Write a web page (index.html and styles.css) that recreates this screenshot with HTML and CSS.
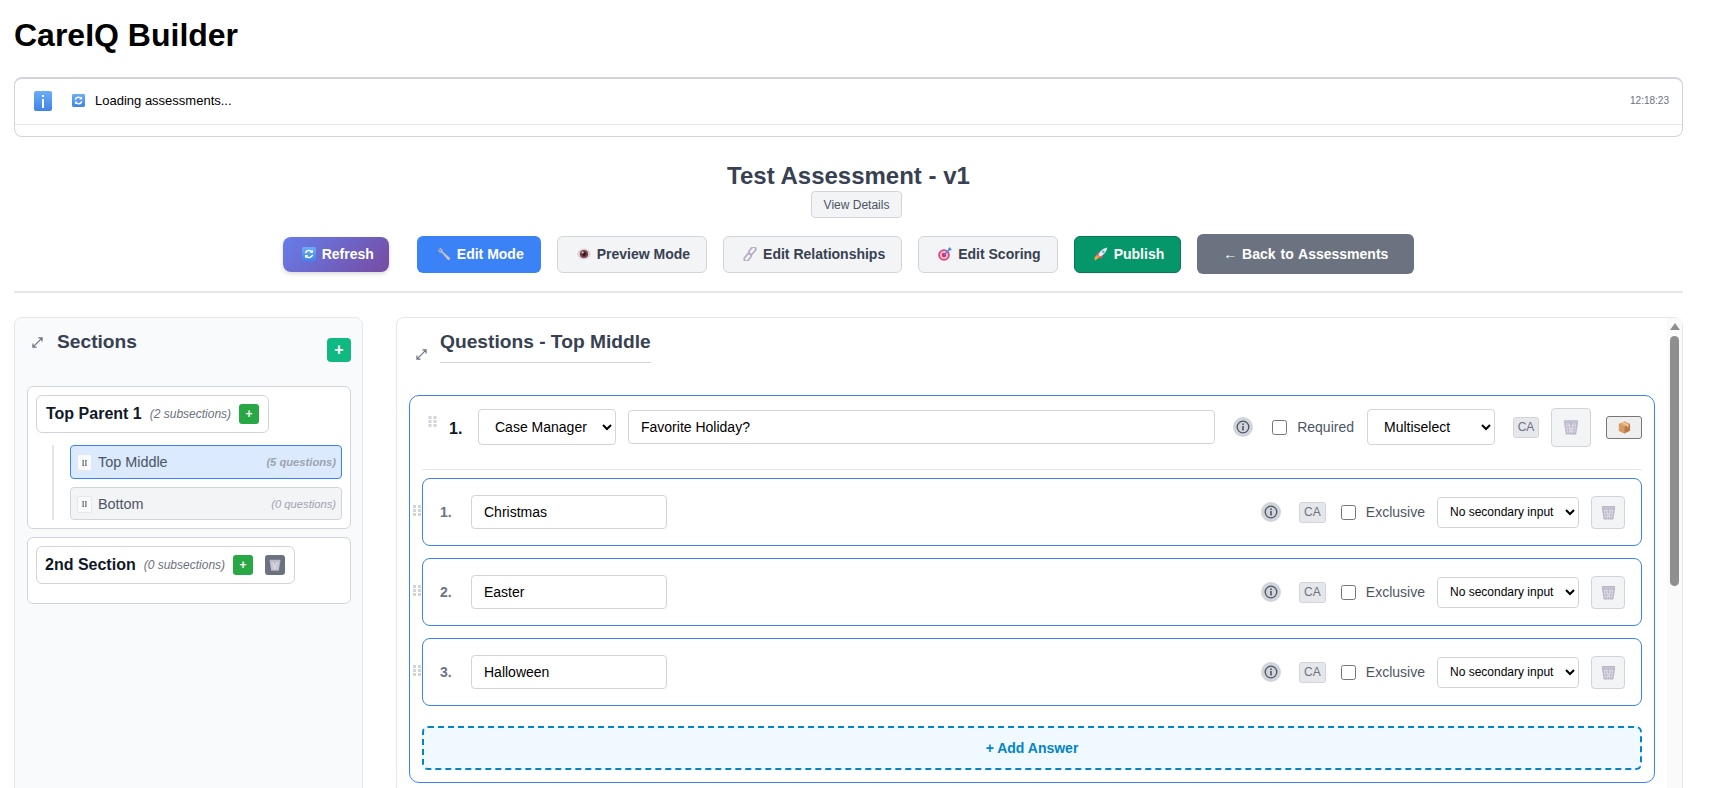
FILE: index.html
```html
<!DOCTYPE html>
<html lang="en">
<head>
  <meta charset="UTF-8">
  <title>CareIQ Builder</title>
  <link rel="stylesheet" href="styles.css">
</head>
<body>
  <!-- icon sprite -->
  <svg class="sprite" aria-hidden="true">
    <defs>
      <linearGradient id="blueTile" x1="0" y1="0" x2="0" y2="1">
        <stop offset="0" stop-color="#6aaef5"/>
        <stop offset="1" stop-color="#3f83ea"/>
      </linearGradient>
    </defs>
    <symbol id="i-info" viewBox="0 0 18 20">
      <rect width="18" height="20" rx="2" fill="url(#blueTile)"/>
      <rect x="8" y="8" width="2" height="9" fill="#fff"/>
      <rect x="8" y="4" width="2" height="2" fill="#fff"/>
    </symbol>
    <symbol id="i-refresh" viewBox="0 0 14 14">
      <rect width="14" height="14" rx="1.5" fill="url(#blueTile)"/>
      <path d="M3.4 6.2A3.7 3.7 0 0 1 10 5M10.6 7.8A3.7 3.7 0 0 1 4 9" fill="none" stroke="#fff" stroke-width="1.5"/>
      <path d="M10.9 2.8v3.2H7.7zM3.1 11.2V8h3.2z" fill="#fff"/>
    </symbol>
    <symbol id="i-wrench" viewBox="0 0 14 14">
      <path d="M2 1.2 4.2 3.4 3.4 4.2 1.2 2A3 3 0 0 0 4.6 5.6L10.5 12.6A1.3 1.3 0 0 0 12.6 10.6L5.6 4.6A3 3 0 0 0 2 1.2Z" fill="#c3c9d4" stroke="#8d94a3" stroke-width=".4"/>
    </symbol>
    <symbol id="i-eye" viewBox="0 0 14 14">
      <ellipse cx="7" cy="7" rx="6.6" ry="5.4" fill="#d9d3d6"/>
      <circle cx="7" cy="7" r="4.1" fill="#7a3b46"/>
      <circle cx="7" cy="7" r="2" fill="#2d1a20"/>
      <circle cx="5.6" cy="5.5" r="1" fill="#f1e6e8"/>
    </symbol>
    <symbol id="i-link" viewBox="0 0 14 14">
      <g fill="none" stroke="#b7aec4" stroke-width="1.8">
        <rect x="7.1" y="-.6" width="4.4" height="8.4" rx="2.2" transform="rotate(40 9.3 3.6)"/>
        <rect x="2.5" y="6.2" width="4.4" height="8.4" rx="2.2" transform="rotate(40 4.7 10.4)"/>
      </g>
    </symbol>
    <symbol id="i-target" viewBox="0 0 14 14">
      <circle cx="6" cy="8" r="5.8" fill="#e0457b"/>
      <circle cx="6" cy="8" r="3.9" fill="#f4c4d6"/>
      <circle cx="6" cy="8" r="2.2" fill="#d92f6c"/>
      <path d="M6 8 12 2" stroke="#3f83ea" stroke-width="1.2"/>
      <path d="M10.4 1.4 12 0l.4 1.6L14 2l-1.6 1.6-2-.4z" fill="#3f83ea"/>
    </symbol>
    <symbol id="i-rocket" viewBox="0 0 14 14">
      <path d="M5 9 2 8.500 4 5.600 6.500 5.300zM5 9l.6 3 2.900-2 .3-2.500z" fill="#e8577e"/>
      <path d="M4.500 8.200C5.500 4.500 8.800 1.500 13.400.6 12.500 5.200 9.500 8.500 5.800 9.500z" fill="#eceaf1"/>
      <circle cx="9.300" cy="4.700" r="1.300" fill="#5da5ee"/>
      <path d="M4 9.500 1 13l3.500-3z M3.300 8.800.6 11.300" stroke="#f6a23a" stroke-width="1.400" fill="#f6a23a"/>
    </symbol>
    <symbol id="i-trash" viewBox="0 0 14 14">
      <path d="M.8 1h12.400v1.600L11.500 13.600h-9L.8 2.600z" fill="#b9b5c7"/>
      <path d="M.8 2.400h12.400" stroke="#d5d2de" stroke-width=".6"/>
      <path d="M3 3.500 4 12.500M5.500 3.500 6 12.500M8.500 3.500 8 12.500M11 3.500 10 12.500M4.200 3.500l4 9M9.800 3.500l-4 9M2.300 5.500h9.400M2.600 8h8.800M3 10.500h8" stroke="#e4e2eb" stroke-width=".6"/>
    </symbol>
    <symbol id="i-box" viewBox="0 0 14 14">
      <path d="M7 .5 13 3.300V10.500L7 13.500 1 10.500V3.300z" fill="#b97a48"/>
      <path d="M7 .5 13 3.300 7 6.200 1 3.300z" fill="#e2ab78"/>
      <path d="M7 6.200V13.500L1 10.500V3.300z" fill="#d99a63"/>
      <path d="M3.800 1.900 9.900 4.800V7L11.300 6.300V4.100L5.100 1.300z" fill="#f0cfa7"/>
    </symbol>
    <symbol id="i-expand" viewBox="0 0 12 12">
      <path d="M7 1h4v4M5 11H1V7M11 1 1 11" fill="none" stroke="#6b7280" stroke-width="1.300"/>
    </symbol>
    <symbol id="i-dots" viewBox="0 0 8 11">
      <path d="M0 0h3v3H0zM5 0h3v3H5zM0 4h3v3H0zM5 4h3v3H5zM0 8h3v3H0zM5 8h3v3H5z" fill="currentColor"/>
    </symbol>
    <symbol id="i-tip" viewBox="0 0 20 20">
      <circle cx="10" cy="10" r="10" fill="#d1d5db"/>
      <circle cx="10" cy="10" r="5.800" fill="none" stroke="#4b5563" stroke-width="1.300"/>
      <rect x="9.200" y="9" width="1.600" height="4.500" fill="#4b5563"/>
      <rect x="9.200" y="6.400" width="1.600" height="1.600" fill="#4b5563"/>
    </symbol>
  </svg>

  <h1 class="app-title">CareIQ Builder</h1>

  <div class="log-box">
    <div class="log-row">
      <svg class="log-tile"><use href="#i-info"/></svg>
      <svg class="log-refresh"><use href="#i-refresh"/></svg>
      <span class="log-text">Loading assessments...</span>
      <span class="log-time">12:18:23</span>
    </div>
  </div>

  <div class="assessment-head">
    <h2>Test Assessment - v1</h2>
    <button class="details-btn">View Details</button>
  </div>

  <div class="toolbar">
    <button class="btn btn-refresh"><svg class="btn-icon"><use href="#i-refresh"/></svg>Refresh</button>
    <button class="btn btn-blue"><svg class="btn-icon"><use href="#i-wrench"/></svg>Edit Mode</button>
    <button class="btn btn-light"><svg class="btn-icon"><use href="#i-eye"/></svg>Preview Mode</button>
    <button class="btn btn-light"><svg class="btn-icon"><use href="#i-link"/></svg>Edit Relationships</button>
    <button class="btn btn-light"><svg class="btn-icon"><use href="#i-target"/></svg>Edit Scoring</button>
    <button class="btn btn-green"><svg class="btn-icon"><use href="#i-rocket"/></svg>Publish</button>
    <button class="btn btn-back">← Back to Assessments</button>
  </div>

  <div class="builder">
    <!-- left column -->
    <aside class="sections-panel">
      <div class="sections-head">
        <svg class="expand"><use href="#i-expand"/></svg>
        <h3>Sections</h3>
        <button class="add-section">+</button>
      </div>

      <div class="group">
        <div class="chip">
          <strong>Top Parent 1</strong>
          <em>(2 subsections)</em>
          <button class="mini-btn mini-add">+</button>
        </div>
        <div class="sub-list">
          <div class="sub-item sub-active">
            <span class="handle"><svg><use href="#i-dots"/></svg></span>
            <span class="sub-name">Top Middle</span>
            <span class="sub-count">(5 questions)</span>
          </div>
          <div class="sub-item">
            <span class="handle"><svg><use href="#i-dots"/></svg></span>
            <span class="sub-name">Bottom</span>
            <span class="sub-count sub-empty">(0 questions)</span>
          </div>
        </div>
      </div>

      <div class="group group-empty">
        <div class="chip chip-tight">
          <strong>2nd Section</strong>
          <em>(0 subsections)</em>
          <button class="mini-btn mini-add">+</button>
          <button class="mini-btn mini-del"><svg><use href="#i-trash"/></svg></button>
        </div>
      </div>
    </aside>

    <!-- right column -->
    <section class="questions-panel">
      <div class="questions-head">
        <svg class="expand"><use href="#i-expand"/></svg>
        <h3>Questions - Top Middle</h3>
      </div>

      <div class="question-card">
        <div class="question-row">
          <svg class="q-dots"><use href="#i-dots"/></svg>
          <span class="q-num">1.</span>
          <select class="q-role"><option>Case Manager</option></select>
          <input class="q-text" type="text" value="Favorite Holiday?">
          <svg class="tip q-tip"><use href="#i-tip"/></svg>
          <input class="check q-check" type="checkbox">
          <span class="check-label">Required</span>
          <select class="q-type"><option>Multiselect</option></select>
          <span class="ca q-ca">CA</span>
          <button class="trash-btn q-trash"><svg><use href="#i-trash"/></svg></button>
          <button class="box-btn"><svg><use href="#i-box"/></svg></button>
        </div>

        <div class="answer-card">
          <svg class="a-dots"><use href="#i-dots"/></svg>
          <span class="a-num">1.</span>
          <input class="a-text" type="text" value="Christmas">
          <svg class="tip a-tip"><use href="#i-tip"/></svg>
          <span class="ca">CA</span>
          <input class="check a-check" type="checkbox">
          <span class="check-label">Exclusive</span>
          <select class="a-input"><option>No secondary input</option></select>
          <button class="trash-btn a-trash"><svg><use href="#i-trash"/></svg></button>
        </div>
        <div class="answer-card">
          <svg class="a-dots"><use href="#i-dots"/></svg>
          <span class="a-num">2.</span>
          <input class="a-text" type="text" value="Easter">
          <svg class="tip a-tip"><use href="#i-tip"/></svg>
          <span class="ca">CA</span>
          <input class="check a-check" type="checkbox">
          <span class="check-label">Exclusive</span>
          <select class="a-input"><option>No secondary input</option></select>
          <button class="trash-btn a-trash"><svg><use href="#i-trash"/></svg></button>
        </div>
        <div class="answer-card">
          <svg class="a-dots"><use href="#i-dots"/></svg>
          <span class="a-num">3.</span>
          <input class="a-text" type="text" value="Halloween">
          <svg class="tip a-tip"><use href="#i-tip"/></svg>
          <span class="ca">CA</span>
          <input class="check a-check" type="checkbox">
          <span class="check-label">Exclusive</span>
          <select class="a-input"><option>No secondary input</option></select>
          <button class="trash-btn a-trash"><svg><use href="#i-trash"/></svg></button>
        </div>

        <button class="add-answer">+ Add Answer</button>
      </div>

      <!-- scrollbar of the panel -->
      <div class="scroll-track">
        <span class="scroll-arrow"></span>
        <span class="scroll-thumb"></span>
      </div>
    </section>
  </div>
</body>
</html>
```

FILE: styles.css
```css
* {
  box-sizing: border-box;
}
html, body {
  height: 100%;
  overflow: hidden;
}
body {
  margin: 0;
  padding: 0 47px 0 14px;
  background: #fff;
  color: #000;
  font-family: "Liberation Sans", Arial, sans-serif;
}
button, input, select {
  font-family: inherit;
}
.sprite {
  position: absolute;
  width: 0;
  height: 0;
}

.app-title {
  margin: 17px 0 23px;
  font-size: 32px;
  line-height: 37px;
  font-weight: 700;
}

/* log box */
.log-box {
  height: 60px;
  border: 1px solid #d1d5db;
  border-top-width: 2px;
  border-radius: 8px;
}
.log-row {
  display: flex;
  align-items: center;
  height: 46px;
  padding: 0 13px 2px 19px;
  border-bottom: 1px solid #e5e7eb;
}
.log-tile {
  width: 18px;
  height: 20px;
}
.log-refresh {
  width: 13px;
  height: 13px;
  margin-left: 20px;
}
.log-text {
  margin-left: 10px;
  font-size: 13px;
}
.log-time {
  margin-left: auto;
  color: #6b7280;
  font-size: 10px;
}

/* title and toolbar */
.assessment-head {
  display: flex;
  flex-direction: column;
  align-items: center;
  margin-top: 25px;
}
.assessment-head h2 {
  margin: 0 0 1px;
  color: #374151;
  font-size: 24px;
  line-height: 28px;
}
.details-btn {
  width: 91px;
  height: 27px;
  margin-left: 16px;
  padding: 0;
  border: 1px solid #d1d5db;
  border-radius: 4px;
  background: #f3f4f6;
  color: #4b5563;
  font-size: 12px;
}
.toolbar {
  display: flex;
  justify-content: center;
  align-items: center;
  gap: 16px;
  height: 40px;
  margin-top: 16px;
}
.btn {
  display: flex;
  align-items: center;
  height: 37px;
  padding: 0 16px;
  border: 1px solid transparent;
  border-radius: 6px;
  font-size: 14px;
  font-weight: 700;
  white-space: nowrap;
}
.btn-icon {
  width: 14px;
  height: 14px;
  margin: 0 6px 0 3px;
  flex: none;
}
.btn-refresh {
  height: 35px;
  margin-right: 12px;
  padding-right: 15px;
  border: 0;
  border-radius: 8px;
  background: linear-gradient(135deg, #667eea, #764ba2);
  box-shadow: 0 2px 4px rgba(0, 0, 0, .15);
  color: #fff;
}
.btn-blue {
  background: #3b82f6;
  color: #fff;
}
.btn-light {
  background: #f3f4f6;
  border-color: #d1d5db;
  color: #374151;
}
.btn-green {
  background: #059669;
  border-color: #047857;
  color: #fff;
}
.btn-back {
  height: 40px;
  padding: 0 25px;
  background: #6b7280;
  color: #fff;
  word-spacing: 1px;
}

.builder {
  display: grid;
  grid-template-columns: 349px 1fr;
  gap: 33px;
  height: 600px;
  margin-top: 17px;
  padding-top: 24px;
  border-top: 2px solid #e5e7eb;
}

.expand {
  width: 11px;
  height: 11px;
  flex: none;
}

/* sections column */
.sections-panel {
  padding: 0 11px 0 12px;
  border: 1px solid #e5e7eb;
  border-radius: 8px;
  background: #f9fafb;
}
.sections-head {
  display: flex;
  height: 68px;
}
.sections-head .expand {
  margin: 19px 0 0 5px;
}
.sections-head h3 {
  margin: 12px 0 0 14px;
  color: #374151;
  font-size: 19.2px;
  line-height: 24px;
}
.add-section {
  width: 24px;
  height: 24px;
  margin: 20px 0 0 auto;
  padding: 0;
  border: 0;
  border-radius: 4px;
  background: #10b981;
  color: #fff;
  font-size: 16px;
  font-weight: 700;
  line-height: 22px;
}
.group {
  margin-bottom: 8px;
  padding: 8px;
  border: 1px solid #d1d5db;
  border-radius: 6px;
  background: #fff;
}
.group-empty {
  height: 67px;
}
.chip {
  display: inline-flex;
  align-items: center;
  height: 38px;
  padding: 0 9px;
  border: 1px solid #d1d5db;
  border-radius: 6px;
  background: #fff;
}
.chip-tight {
  padding-left: 8px;
}
.chip strong {
  color: #111827;
  font-size: 16px;
}
.chip em {
  margin: 0 8px;
  color: #6b7280;
  font-size: 12px;
}
.mini-btn {
  display: flex;
  justify-content: center;
  align-items: center;
  width: 20px;
  height: 20px;
  padding: 0;
  border: 0;
  border-radius: 3px;
  color: #fff;
  font-size: 12px;
  font-weight: 700;
}
.mini-add {
  background: #28a745;
}
.mini-del {
  margin-left: 12px;
  background: #6b7280;
}
.mini-del svg {
  width: 12px;
  height: 12px;
}
.sub-list {
  display: flex;
  flex-direction: column;
  gap: 8px;
  margin: 12px 0 0 16px;
  padding-left: 16px;
  border-left: 2px solid #e5e7eb;
}
.sub-item {
  display: flex;
  align-items: center;
  height: 33px;
  padding: 0 5px 0 6px;
  border: 1px solid #d1d5db;
  border-radius: 4px;
  background: #f3f4f6;
}
.sub-active {
  height: 34px;
  border-color: #3b82f6;
  background: #dbeafe;
}
.handle {
  display: flex;
  justify-content: center;
  align-items: center;
  width: 15px;
  height: 17px;
  margin-top: 1px;
  border: 1px solid #e5e7eb;
  border-radius: 2px;
  background: #f9fafb;
  color: #6b7280;
}
.handle svg {
  width: 5px;
  height: 6px;
}
.sub-name {
  margin-left: 6px;
  color: #4b5563;
  font-size: 14.4px;
}
.sub-count {
  margin-left: auto;
  color: #9ca3af;
  font-size: 11.2px;
  font-style: italic;
  font-weight: 700;
}
.sub-empty {
  font-weight: 400;
}

/* questions column */
.questions-panel {
  position: relative;
  padding: 0 27px 0 12px;
  border: 1px solid #e5e7eb;
  border-radius: 8px;
  background: #fff;
}
.questions-head {
  display: flex;
  height: 77px;
}
.questions-head .expand {
  margin: 31px 13px 0 7px;
}
.questions-head h3 {
  height: 45px;
  margin: 0;
  padding-top: 12px;
  border-bottom: 1px solid #d1d5db;
  color: #374151;
  font-size: 19.2px;
  line-height: 24px;
}
.question-card {
  padding: 12px;
  border: 1px solid #3b82f6;
  border-radius: 10px;
  background: #fff;
}
.question-row {
  display: flex;
  align-items: center;
  height: 62px;
  margin-bottom: 8px;
  padding-bottom: 23px;
  border-bottom: 1px solid #e5e7eb;
}
.q-dots {
  align-self: flex-start;
  width: 9px;
  height: 11px;
  margin: 8px 0 0 6px;
  color: #d1d5db;
}
.q-num {
  width: 29px;
  margin: 4px 0 0 12px;
  color: #111827;
  font-size: 16px;
  font-weight: 700;
}
select, input[type="text"] {
  border: 1px solid #d1d5db;
  border-radius: 4px;
  background: #fff;
  color: #000;
  font-size: 14px;
}
.q-role {
  width: 138px;
  height: 36px;
  padding: 0 4px 0 12px;
}
.q-text {
  flex: 1;
  min-width: 0;
  height: 34px;
  margin-left: 12px;
  padding: 0 12px;
}
.tip {
  width: 20px;
  height: 20px;
  flex: none;
}
.q-tip {
  margin-left: 18px;
}
.check {
  width: 15px;
  height: 15px;
  margin: 0;
  flex: none;
}
.q-check {
  margin-left: 19px;
}
.check-label {
  margin-left: 10px;
  color: #4b5563;
  font-size: 14px;
}
.q-type {
  width: 128px;
  height: 36px;
  margin-left: 13px;
  padding: 0 4px 0 12px;
}
.ca {
  width: 27px;
  height: 21px;
  margin-left: 18px;
  border: 1px solid #d1d5db;
  border-radius: 3px;
  background: #e5e7eb;
  color: #6b7280;
  font-size: 12px;
  line-height: 18px;
  text-align: center;
}
.q-ca {
  width: 26px;
}
.trash-btn {
  display: flex;
  justify-content: center;
  align-items: center;
  padding: 0;
  border: 1px solid #d1d5db;
  border-radius: 4px;
  background: #f3f4f6;
}
.q-trash {
  width: 40px;
  height: 39px;
  margin-left: 12px;
}
.q-trash svg {
  width: 16px;
  height: 16px;
}
.box-btn {
  display: flex;
  justify-content: center;
  align-items: center;
  width: 36px;
  height: 23px;
  margin-left: 15px;
  padding: 0;
  border: 1px solid #767676;
  border-radius: 3px;
  background: #efefef;
}
.box-btn svg {
  width: 13px;
  height: 13px;
}
.answer-card {
  position: relative;
  display: flex;
  align-items: center;
  height: 68px;
  margin-bottom: 12px;
  padding: 0 16px 0 17px;
  border: 1px solid #3b82f6;
  border-radius: 8px;
  background: #fff;
}
.a-dots {
  position: absolute;
  left: -10px;
  top: 26px;
  width: 8px;
  height: 11px;
  color: #d1d5db;
}
.a-num {
  width: 31px;
  color: #6b7280;
  font-size: 14px;
  font-weight: 700;
}
.a-text {
  width: 196px;
  height: 34px;
  padding: 0 12px;
}
.a-tip {
  margin-left: auto;
}
.a-check {
  margin-left: 15px;
}
.a-input {
  width: 142px;
  height: 31px;
  margin-left: 12px;
  padding: 0 4px 0 8px;
  font-size: 12px;
}
.a-trash {
  width: 34px;
  height: 33px;
  margin-left: 12px;
}
.a-trash svg {
  width: 15px;
  height: 15px;
}
.add-answer {
  display: block;
  width: 100%;
  height: 44px;
  margin-top: 20px;
  padding: 0;
  border: 2px dashed #0284c7;
  border-radius: 6px;
  background: #f0f9ff;
  color: #0284c7;
  font-size: 14px;
  font-weight: 700;
}

/* fake scrollbar */
.scroll-track {
  position: absolute;
  top: 0;
  right: 0;
  bottom: 0;
  width: 15px;
  background: #fafafa;
}
.scroll-arrow {
  display: block;
  width: 0;
  margin: 5px auto 0;
  border: solid transparent;
  border-width: 0 5px 7px;
  border-bottom-color: #8f8f8f;
}
.scroll-thumb {
  display: block;
  width: 9px;
  height: 250px;
  margin: 6px auto 0;
  border-radius: 5px;
  background: #8f8f8f;
}
```
